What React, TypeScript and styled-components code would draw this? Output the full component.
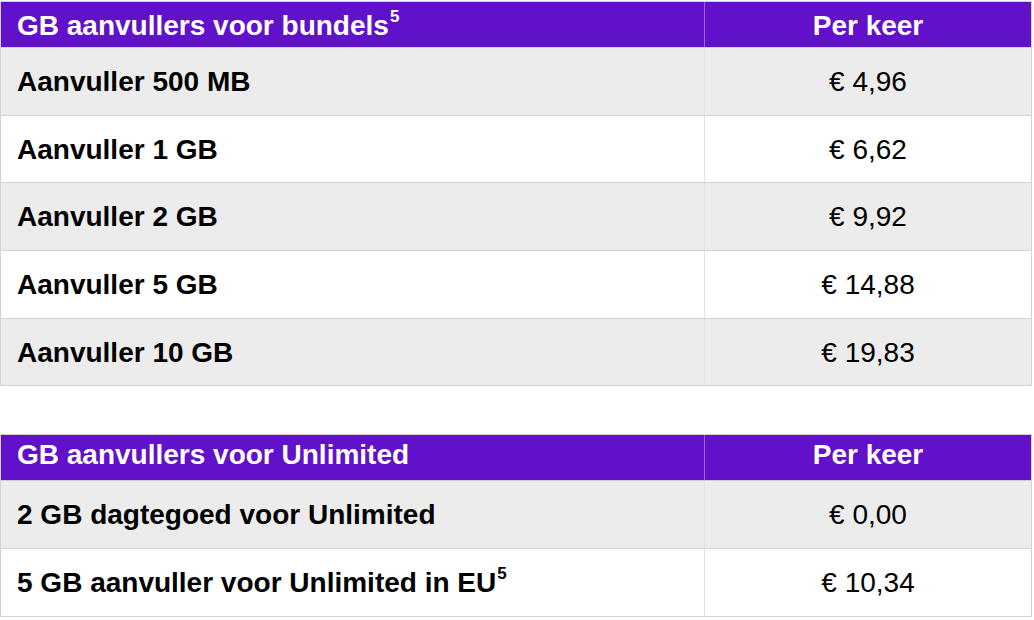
import React from "react";
import styled, { createGlobalStyle } from "styled-components";

const GlobalStyle = createGlobalStyle`
  *, *::before, *::after {
    box-sizing: border-box;
  }
  html, body {
    margin: 0;
    padding: 0;
    background: #ffffff;
  }
  body {
    font-family: "Liberation Sans", Arial, Helvetica, sans-serif;
    -webkit-font-smoothing: antialiased;
  }
`;

const Page = styled.div`
  width: 1032px;
  padding-top: 1px;
  display: flex;
  flex-direction: column;
  gap: 48px;
`;

const Table = styled.div`
  display: flex;
  flex-direction: column;
  border-top: 1.5px solid #cfcfcf;
  border-left: 1.5px solid #d2d2d2;
  border-right: 1.5px solid #d2d2d2;
`;

const HeaderRow = styled.div`
  display: grid;
  grid-template-columns: 704px 1fr;
  height: 46px;
  flex: none;
  background: #6111c9;
  border-bottom: 1.5px solid #cdcdcd;
`;

const HeaderCell = styled.div<{ $center?: boolean; $divider?: boolean; $raise?: boolean }>`
  display: flex;
  align-items: center;
  justify-content: ${(p) => (p.$center ? "center" : "flex-start")};
  padding: ${(p) => (p.$raise ? "0 16px 6px 16px" : "3px 16px 0 16px")};
  color: #ffffff;
  font-weight: 700;
  font-size: 28px;
  white-space: nowrap;
  border-right: ${(p) => (p.$divider ? "1px solid #9a63e3" : "none")};
`;

const Row = styled.div<{ $shade: boolean }>`
  display: grid;
  grid-template-columns: 704px 1fr;
  height: 67.7px;
  flex: none;
  background: ${(p) => (p.$shade ? "#ececec" : "#ffffff")};
  border-bottom: 1.5px solid #d4d4d4;
`;

const Cell = styled.div<{ $center?: boolean; $bold?: boolean; $divider?: boolean }>`
  display: flex;
  align-items: center;
  justify-content: ${(p) => (p.$center ? "center" : "flex-start")};
  padding: 1px 16px 0 16px;
  color: #000000;
  font-weight: ${(p) => (p.$bold ? 700 : 400)};
  font-size: 28px;
  white-space: nowrap;
  border-right: ${(p) => (p.$divider ? "1px solid #e2e2e2" : "none")};
`;

const Sup = styled.span`
  font-size: 17px;
  font-weight: 700;
  position: relative;
  top: -9px;
  margin-left: 1px;
`;

type Item = { label: string; price: string; note?: string };

const bundels: Item[] = [
  { label: "Aanvuller 500 MB", price: "€ 4,96" },
  { label: "Aanvuller 1 GB", price: "€ 6,62" },
  { label: "Aanvuller 2 GB", price: "€ 9,92" },
  { label: "Aanvuller 5 GB", price: "€ 14,88" },
  { label: "Aanvuller 10 GB", price: "€ 19,83" },
];

const unlimited: Item[] = [
  { label: "2 GB dagtegoed voor Unlimited", price: "€ 0,00" },
  { label: "5 GB aanvuller voor Unlimited in EU", price: "€ 10,34", note: "5" },
];

const PriceTable: React.FC<{
  title: string;
  note?: string;
  items: Item[];
  raiseHeader?: boolean;
}> = ({ title, note, items, raiseHeader }) => (
  <Table>
    <HeaderRow>
      <HeaderCell $divider $raise={raiseHeader}>
        {title}
        {note && <Sup>{note}</Sup>}
      </HeaderCell>
      <HeaderCell $center $raise={raiseHeader}>
        Per keer
      </HeaderCell>
    </HeaderRow>
    {items.map((it, i) => (
      <Row key={it.label} $shade={i % 2 === 0}>
        <Cell $bold $divider>
          {it.label}
          {it.note && <Sup>{it.note}</Sup>}
        </Cell>
        <Cell $center>{it.price}</Cell>
      </Row>
    ))}
  </Table>
);

export default function App() {
  return (
    <>
      <GlobalStyle />
      <Page>
        <PriceTable title="GB aanvullers voor bundels" note="5" items={bundels} />
        <PriceTable title="GB aanvullers voor Unlimited" items={unlimited} raiseHeader />
      </Page>
    </>
  );
}
